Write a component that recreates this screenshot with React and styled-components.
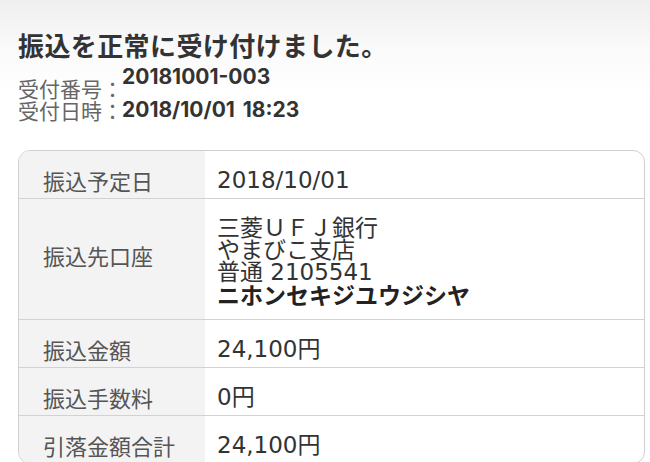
import React from 'react';
import styled, { createGlobalStyle, css } from 'styled-components';

const GlobalStyle = createGlobalStyle`
    html, body {
        margin: 0;
        padding: 0;
        overflow: hidden;
        background: #fff;
    }
    body {
        font-family: "Inter", "Noto Sans CJK JP", sans-serif;
        color: #333;
    }
`

const rows = [
    { label: '振込予定日', lines: ['2018/10/01'] },
    { label: '振込先口座', lines: ['三菱ＵＦＪ銀行', 'やまびこ支店', '普通 2105541'], strong: 'ニホンセキジユウジシヤ' },
    { label: '振込金額', lines: ['24,100円'] },
    { label: '振込手数料', lines: ['0円'] },
    { label: '引落金額合計', lines: ['24,100円'] },
];

export default function App() {
    return (
        <Page>
            <GlobalStyle />
            <Title>振込を正常に受け付けました。</Title>
            <Info>
                <InfoRow>
                    <InfoLabel $raised>受付番号：</InfoLabel>
                    <InfoValue>20181001-003</InfoValue>
                </InfoRow>
                <InfoRow>
                    <InfoLabel>受付日時：</InfoLabel>
                    <InfoValue>2018/10/01&nbsp;18:23</InfoValue>
                </InfoRow>
            </Info>
            <Table>
                {rows.map(row => {
                    const multi = row.lines.length > 1;
                    return (
                        <Row key={row.label}>
                            <Label $multi={multi}>{row.label}</Label>
                            <Value $multi={multi}>
                                {row.lines.map(line => <Line key={line}>{line}</Line>)}
                                {row.strong && <Line $bold>{row.strong}</Line>}
                            </Value>
                        </Row>
                    )
                })}
            </Table>
        </Page>
    )
}

const Page = styled.div`
    min-height: 100vh;
    padding: 29px 5px 0 18px;
    box-sizing: border-box;
    background: linear-gradient(to bottom, #efefef 0px, #fafafa 50px, #fff 95px);
`

const Title = styled.h1`
    margin: 0;
    font-family: "Noto Sans CJK JP", sans-serif;
    font-size: 26px;
    line-height: 31px;
    font-weight: 700;
    letter-spacing: 0.4px;
    color: #333;
`

const Info = styled.div`
    margin-top: 6px;
    display: flex;
    flex-direction: column;
`

const InfoRow = styled.div`
    display: flex;
    align-items: flex-start;
`

const InfoLabel = styled.span`
    width: 104px;
    font-family: "Noto Sans CJK JP", sans-serif;
    font-size: 21px;
    line-height: 22px;
    color: #666;
    white-space: nowrap;

    ${p => p.$raised && css`
        padding-top: 11px;
    `}
`

const InfoValue = styled.span`
    font-size: 21px;
    line-height: 22px;
    font-weight: 700;
    color: #333;
    word-spacing: 3px;
`

const Table = styled.div`
    margin-top: 29px;
    border: 1px solid #cfcfcf;
    border-radius: 12px;
    overflow: hidden;
    background: #fff;
`

const Row = styled.div`
    display: grid;
    grid-template-columns: 186px 1fr;

    & + & {
        border-top: 1px solid #d2d2d2;
    }
`

const Label = styled.div`
    display: flex;
    background: #f3f3f3;
    font-family: "Noto Sans CJK JP", sans-serif;
    font-size: 22px;
    line-height: 22px;
    color: #555;
    white-space: nowrap;

    ${p => p.$multi ? css`
        align-items: center;
        padding: 0 24px 8px;
    ` : css`
        align-items: flex-start;
        padding: 18px 24px 7px;
    `}
`

const Value = styled.div`
    display: flex;
    flex-direction: column;
    font-family: "DejaVu Sans", "Noto Sans CJK JP", sans-serif;
    font-size: 23px;
    line-height: 22px;
    color: #333;
    padding: ${p => p.$multi ? '18px 12px 14px' : '18px 12px 7px'};
`

const Line = styled.div`
    white-space: nowrap;

    ${p => p.$bold && css`
        font-family: "Noto Sans CJK JP", sans-serif;
        font-weight: 700;
        color: #222;
    `}
`
